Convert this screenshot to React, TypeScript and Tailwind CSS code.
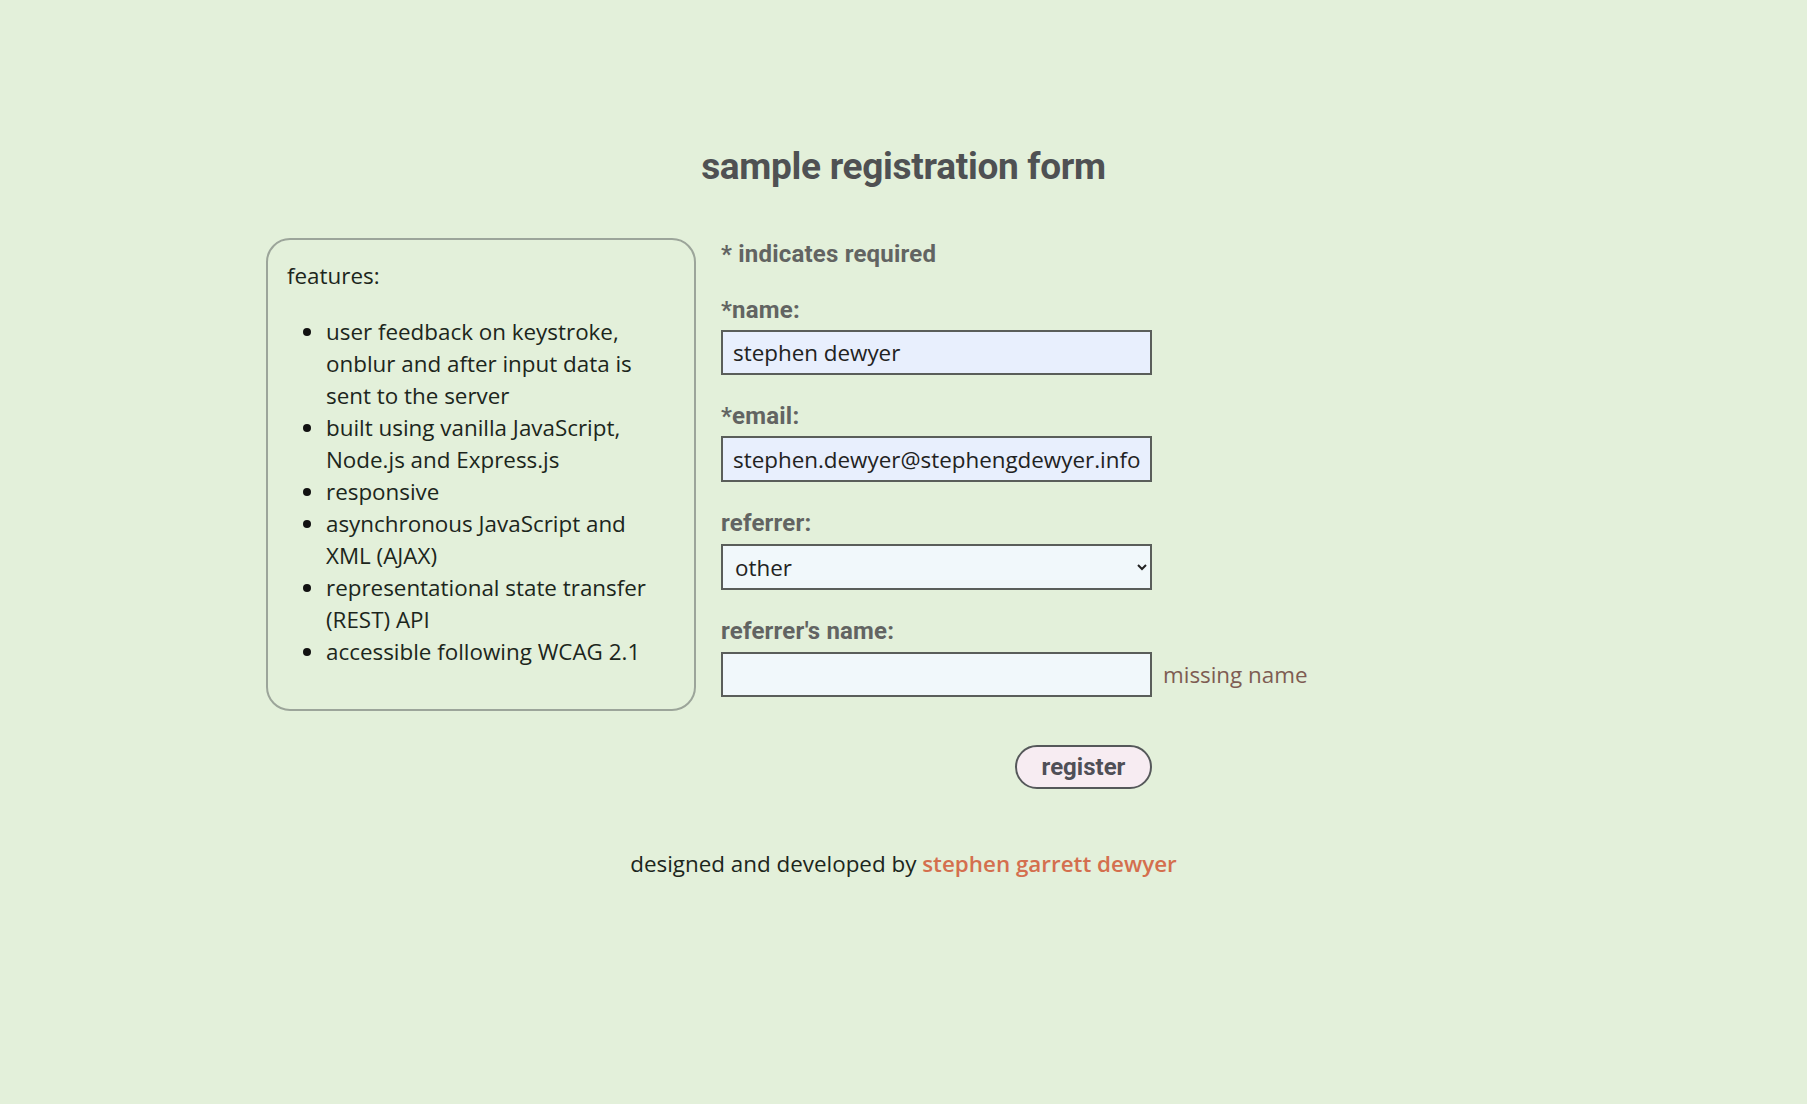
import React from "react";

const features = [
  "user feedback on keystroke, onblur and after input data is sent to the server",
  "built using vanilla JavaScript, Node.js and Express.js",
  "responsive",
  "asynchronous JavaScript and XML (AJAX)",
  "representational state transfer (REST) API",
  "accessible following WCAG 2.1",
];

export default function App() {
  return (
    <div
      className="min-h-[1104px] w-full bg-[#e3f0da] text-[#1c261c]"
      style={{ fontFamily: '"Open Sans", "Noto Sans", sans-serif' }}
    >
      <h1 className="pt-[145px] text-center font-['Roboto',sans-serif] text-[37px] font-bold leading-[44px] text-[#4f5153] tracking-[-0.3px]">
        sample registration form
      </h1>

      <div className="mx-auto mt-[49px] flex w-[1275px] items-start gap-[25px]">
        <section className="w-[430px] shrink-0 rounded-[24px] border-2 border-[#9ca59a] pl-[19px] pr-[30px] pt-[20px] pb-[41px] text-[22.4px] leading-[32px]">
          <p>features:</p>
          <ul className="mt-[24px] list-disc pl-[39px] marker:text-[#111]">
            {features.map((f) => (
              <li key={f}>{f}</li>
            ))}
          </ul>
        </section>

        <form
          className="flex w-[700px] flex-col pt-[3px]"
          onSubmit={(e) => e.preventDefault()}
        >
          <p className="font-['Roboto',sans-serif] text-[24px] font-bold leading-[26px] tracking-[0.2px] text-[#626462]">
            * indicates required
          </p>

          <label className="mt-[30px] font-['Roboto',sans-serif] text-[24px] font-bold leading-[26px] tracking-[0.2px] text-[#626462]">
            *name:
          </label>
          <input
            className="mt-[7px] h-[45px] w-[431px] border-2 border-[#5a5e5a] bg-[#e8effd] px-[10px] text-[22.4px] text-[#222] outline-none"
            defaultValue="stephen dewyer"
          />

          <label className="mt-[28px] font-['Roboto',sans-serif] text-[24px] font-bold leading-[26px] tracking-[0.2px] text-[#626462]">
            *email:
          </label>
          <input
            className="mt-[7px] h-[46px] w-[431px] border-2 border-[#5a5e5a] bg-[#e8effd] px-[10px] text-[22.4px] text-[#222] outline-none"
            defaultValue="stephen.dewyer@stephengdewyer.info"
          />

          <label className="mt-[28px] font-['Roboto',sans-serif] text-[24px] font-bold leading-[26px] tracking-[0.2px] text-[#626462]">
            referrer:
          </label>
          <select
            className="mt-[8px] h-[46px] w-[431px] border-2 border-[#5a5e5a] bg-[#f1f8fb] px-[8px] text-[22.4px] text-[#222] outline-none"
            defaultValue="other"
          >
            <option value="friend">friend</option>
            <option value="search">search engine</option>
            <option value="other">other</option>
          </select>

          <label className="mt-[28px] font-['Roboto',sans-serif] text-[24px] font-bold leading-[26px] tracking-[0.2px] text-[#626462]">
            referrer's name:
          </label>
          <div className="mt-[8px] flex items-center gap-[11px]">
            <input className="h-[45px] w-[431px] shrink-0 border-2 border-[#5a5e5a] bg-[#f1f8fb] px-[10px] text-[22.4px] text-[#222] outline-none" />
            <span className="whitespace-nowrap text-[22.4px] text-[#7e5c52]">missing name</span>
          </div>

          <div className="mt-[48px] flex w-[431px] justify-end">
            <button
              type="submit"
              className="h-[44px] w-[137px] rounded-full border-2 border-[#55585a] bg-[#f7ecf2] font-['Roboto',sans-serif] text-[24px] font-bold leading-none text-[#4f4f57]"
            >
              register
            </button>
          </div>
        </form>
      </div>

      <footer className="mt-[59px] text-center text-[22.4px] leading-[32px] text-[#1c261c]">
        designed and developed by{" "}
        <a href="#" className="font-semibold text-[#d46f4e]">
          stephen garrett dewyer
        </a>
      </footer>
    </div>
  );
}
